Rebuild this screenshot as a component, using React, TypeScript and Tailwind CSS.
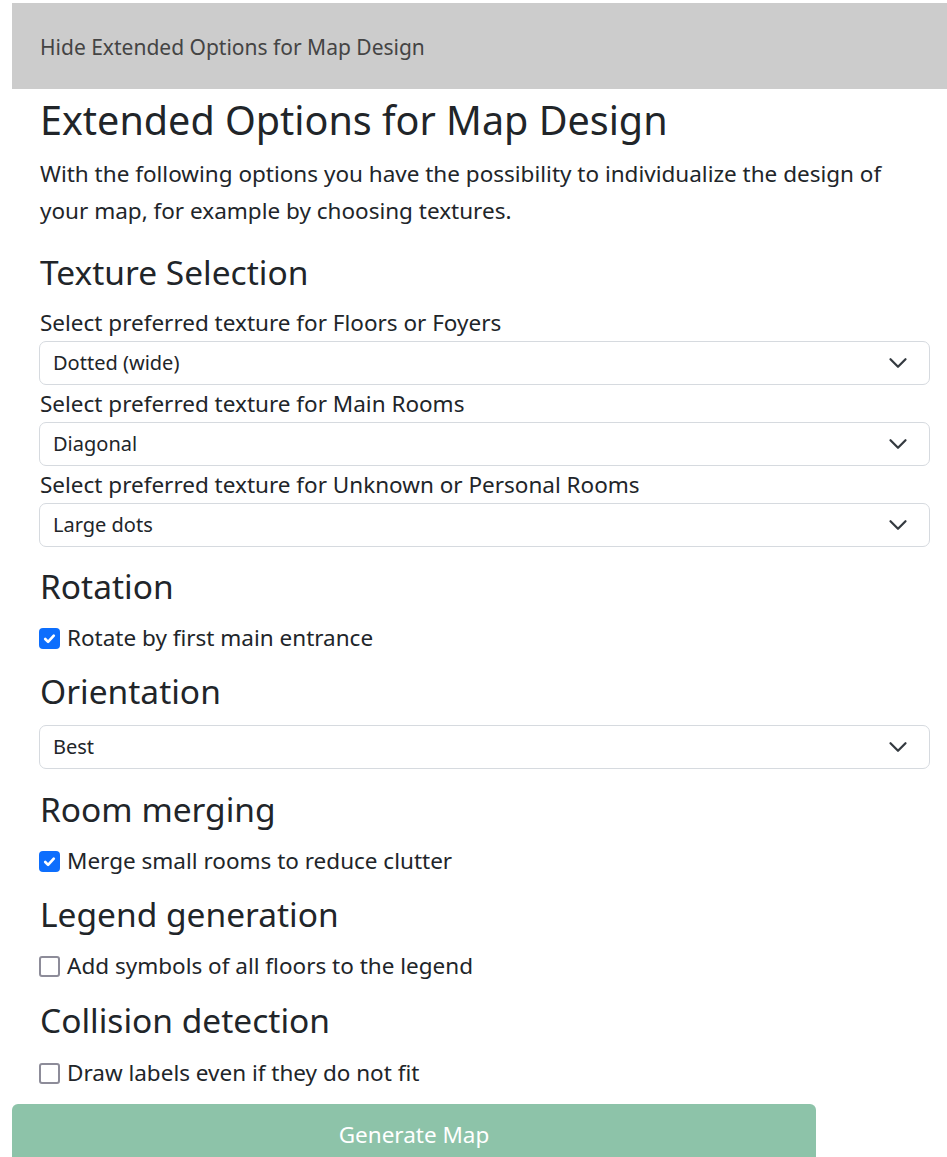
import React from 'react';

const FONT = { fontFamily: '"Noto Sans", "Open Sans", sans-serif' };

const Chevron = () => (
  <svg viewBox="0 0 16 16" width="20" height="20" className="shrink-0">
    <path d="m2 5 6 6 6-6" fill="none" stroke="#343a40" strokeWidth="1.8" strokeLinecap="round" strokeLinejoin="round" />
  </svg>
);

const Select = ({ value }: { value: string }) => (
  <div className="-ml-px flex h-[44px] items-center justify-between rounded-[7px] border border-[#d6dadf] bg-white pl-[13px] pr-[21px] text-[20px] text-[#212529]">
    <span>{value}</span>
    <Chevron />
  </div>
);

const Check = ({ checked, label }: { checked: boolean; label: string }) => (
  <div className="-ml-px flex h-[36px] items-center gap-[7px] text-[22.5px] text-[#212529]">
    {checked ? (
      <span className="flex h-[21px] w-[21px] items-center justify-center rounded-[4px] bg-[#0d6efd]">
        <svg viewBox="0 0 20 20" width="19" height="19">
          <path d="M5.5 10.5l3 3l6-6.5" fill="none" stroke="#fff" strokeWidth="2.8" strokeLinecap="round" strokeLinejoin="round" />
        </svg>
      </span>
    ) : (
      <span className="h-[21px] w-[21px] rounded-[3px] border-2 border-[#8d8c99] bg-white" />
    )}
    <span>{label}</span>
  </div>
);

const H3 = ({ children, className = '' }: { children: React.ReactNode; className?: string }) => (
  <h3 className={`text-[33.5px] leading-[43px] font-normal text-[#212529] ${className}`}>{children}</h3>
);

const Label = ({ children }: { children: React.ReactNode }) => (
  <div className="h-[37px] text-[22.5px] leading-[37px] text-[#212529]">{children}</div>
);

export default function App() {
  return (
    <div className="min-h-screen bg-white pt-[3px]" style={FONT}>
      <div className="ml-[12px] flex h-[86px] items-center bg-[#cccccc] pl-[28px] pt-[3px] text-[21px] text-[#444]">
        Hide Extended Options for Map Design
      </div>

      <div className="pl-[40px] pr-[17px]">
        <h2 className="mt-[6px] text-[39.5px] leading-[50px] font-normal text-[#212529]">
          Extended Options for Map Design
        </h2>
        <p className="mt-[10px] text-[22.5px] leading-[37px] text-[#212529]">
          With the following options you have the possibility to individualize the design of your map, for example by choosing textures.
        </p>

        <H3 className="mt-[22px]">Texture Selection</H3>
        <div className="mt-[10px]">
          <Label>Select preferred texture for Floors or Foyers</Label>
          <Select value="Dotted (wide)" />
          <Label>Select preferred texture for Main Rooms</Label>
          <Select value="Diagonal" />
          <Label>Select preferred texture for Unknown or Personal Rooms</Label>
          <Select value="Large dots" />
        </div>

        <H3 className="mt-[18px]">Rotation</H3>
        <div className="mt-[12px]">
          <Check checked label="Rotate by first main entrance" />
        </div>

        <H3 className="mt-[14px]">Orientation</H3>
        <div className="mt-[12px]">
          <Select value="Best" />
        </div>

        <H3 className="mt-[19px]">Room merging</H3>
        <div className="mt-[12px]">
          <Check checked label="Merge small rooms to reduce clutter" />
        </div>

        <H3 className="mt-[14px]">Legend generation</H3>
        <div className="mt-[12px]">
          <Check checked={false} label="Add symbols of all floors to the legend" />
        </div>

        <H3 className="mt-[15px]">Collision detection</H3>
        <div className="mt-[13px]">
          <Check checked={false} label="Draw labels even if they do not fit" />
        </div>
      </div>

      <button className="ml-[12px] mt-[13px] flex h-[60px] w-[804px] items-start justify-center rounded-t-[6px] bg-[#8dc3a9] pt-[14px] text-[22.5px] text-white">
        Generate Map
      </button>
    </div>
  );
}
